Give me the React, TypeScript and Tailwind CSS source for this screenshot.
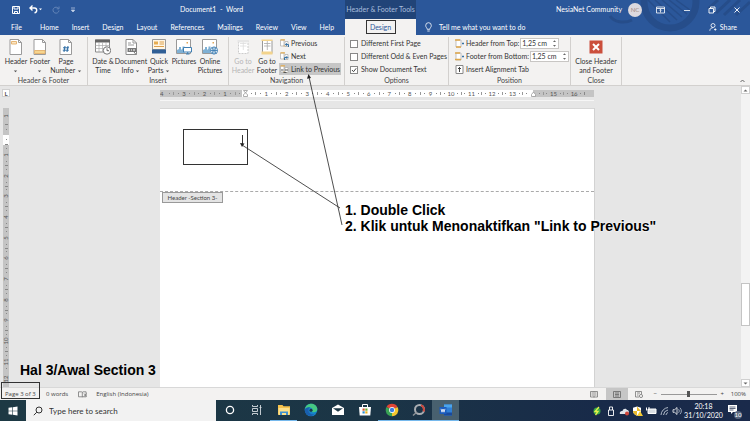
import type { ReactNode } from 'react';

const tabs = ['Home', 'Insert', 'Design', 'Layout', 'References', 'Mailings', 'Review', 'View', 'Help'];

const horizontalMarks = [3, 2, 1, 0, 1, 2, 3, 4, 5, 6, 7, 8, 9, 10, 11, 12, 13, 14, 15, 16];
const verticalMarks = [0, 1, 2, 3, 4, 5, 6, 7, 8, 9, 10, 11];

/* ---------- icons ---------- */

function SheetIcon({ kind }: { kind: 'header' | 'footer' | 'number' }) {
  return (
    <svg className="h-4 w-4" viewBox="0 0 16 16" fill="none">
      <path d="M2 .5h8.5l3 3v12H2z" fill="#fff" stroke="#9a9a9a" />
      <path d="M10.5.5v3h3" stroke="#9a9a9a" />
      {kind === 'header' && <path d="M3.5 2.5h5v2.500h-5z" fill="#fbe6c4" stroke="#e6b674" />}
      {kind === 'footer' && <path d="M2.500 11.500h10.500v3H2.500z" fill="#f6d58e" stroke="#e6b674" />}
      {kind === 'number' && <path d="M7 7l-1 6M10 7l-1 6M5 8.800h6M4.800 11.200h6" stroke="#2e6da4" />}
    </svg>
  );
}

function CalendarIcon() {
  return (
    <svg className="h-4 w-4" viewBox="0 0 16 16" fill="none">
      <path d="M.5 1h14v12H.5z" fill="#fff" stroke="#8a8a8a" />
      <path d="M0 .5h15v3H0z" fill="#666" />
      <path d="M.5 6.500h14M.5 9.500h14M4 3v10M7.500 3v10M11 3v10" stroke="#aaa" strokeWidth=".7" />
      <circle cx="12" cy="11.500" r="3.700" fill="#fff" stroke="#777" />
      <path d="M12 9.300v2.400h2" stroke="#444" strokeWidth=".8" />
    </svg>
  );
}

function DocumentInfoIcon() {
  return (
    <svg className="h-4 w-4" viewBox="0 0 16 16" fill="none">
      <path d="M3 .5h7l3.500 3.500v11.500H3z" fill="#fff" stroke="#8a8a8a" />
      <path d="M10 .5V4h3.500M5 4h3M5 6h6" stroke="#999" />
      <path d="M4.500 9h9v4h-9z" fill="#777" />
      <path d="M6 11h1m1 0h1m1 0h2" stroke="#fff" />
      <path d="M11 13l2 2.500" stroke="#777" />
    </svg>
  );
}

function QuickPartsIcon() {
  return (
    <svg className="h-4 w-4" viewBox="0 0 16 16" fill="none">
      <path d="M1.500.5h13v10h-13z" fill="#fff6e5" stroke="#999" />
      <path d="M3 2.500h4v3H3z" fill="#e6ac50" />
      <path d="M8.500 3H13M8.500 5H13M3 7.500h10" stroke="#dca04c" />
      <path d="M1 10.500h14v4H1z" fill="#2f5f96" />
    </svg>
  );
}

function PictureIcon({ online }: { online?: boolean }) {
  return (
    <svg className="h-4 w-4" viewBox="0 0 16 16" fill="none">
      <path d="M.5.5h14v14H.5z" fill="#fff" stroke="#999" />
      <path d="M1 14V11l2-1V8h2v3l1.500-1.500V7.500h2V14z" fill="#7fb0d4" />
      <path d="M10.500 3h1.500v1.500h-1.500z" fill="#e0a75a" />
      {online ? (
        <g stroke="#3f7fb3" strokeWidth=".9">
          <circle cx="12" cy="11.500" r="3.600" fill="#fff" />
          <path d="M8.500 11.500h7M12 8v7.200M10 8.700c1.300 1.800 1.300 4 0 5.700M14 8.700c-1.300 1.800-1.300 4 0 5.700" />
        </g>
      ) : (
        <path d="M7.500 8.500h8v4.500h-8zM10 15h3.500M11.700 13v2" fill="#fff" stroke="#3f7fb3" />
      )}
    </svg>
  );
}

function GoToIcon({ footer }: { footer?: boolean }) {
  return (
    <svg className="h-4 w-4" viewBox="0 0 16 16" fill="none">
      <path d="M3.500 1.500h9.500v13H3.500z" fill="#fff" stroke={footer ? '#999' : '#ccc'} strokeDasharray={footer ? undefined : '2 1'} />
      <path d="M5 4.500h6.500M5 7h6.500M8.300 2v9" stroke={footer ? '#aaa' : '#ddd'} strokeWidth=".8" />
      <path
        d={footer ? 'M2.500 .5h11v1.500h-11zM2.500 12.500h11v3h-11z' : 'M2.500 1h11v2.500h-11z'}
        fill={footer ? '#f3d48d' : '#e6e6e6'}
      />
    </svg>
  );
}

function MoveIcon({ kind }: { kind: 'previous' | 'next' | 'link' }) {
  return (
    <svg className="h-[9px] w-[9px] shrink-0" viewBox="0 0 9 9" fill="none">
      <path d="M.5 1h3.500v6H.5z" fill="#fff" stroke="#aaa" strokeWidth=".7" />
      <path d="M.5 .8h4.500M3.500 7h4.500" stroke="#e3ad54" strokeWidth="1.200" />
      <path d="M5 2.500h3v5H5z" fill="#fff" stroke="#aaa" strokeWidth=".7" />
      {kind === 'previous' && <path d="M8.500 8V5.500H5.500M6.800 4.200L5.500 5.500l1.300 1.300" stroke="#3572a5" />}
      {kind === 'next' && <path d="M4.500 8V5.500h3M6.500 4.200l1.300 1.300-1.300 1.300" stroke="#3572a5" />}
      {kind === 'link' && <path d="M1 5h2.500M5 5h3M3.500 7.500h3" stroke="#555" />}
    </svg>
  );
}

function MarginIcon({ kind }: { kind: 'top' | 'bottom' | 'tab' }) {
  if (kind === 'tab') {
    return (
      <svg className="h-[9px] w-[9px] shrink-0" viewBox="0 0 9 9" fill="none">
        <path d="M1 .5h7v8H1z" fill="#fff" stroke="#888" />
        <path d="M4.500 2v5M3 3.500h3" stroke="#444" />
      </svg>
    );
  }
  return (
    <svg className="h-[9px] w-[9px] shrink-0" viewBox="0 0 9 9" fill="none">
      <path d="M1 1h5v7H1z" fill="#fff" stroke="#aaa" strokeWidth=".7" />
      <path d={kind === 'top' ? 'M0 1h5M1 8h5' : 'M0 1h5M0 7.500h6'} stroke="#dfa748" strokeWidth="1.500" />
      <path d="M8 3.500v2M7 4.500h2" stroke="#3572a5" />
    </svg>
  );
}

function Caret() {
  return (
    <svg className="inline h-[3px] w-[5px]" viewBox="0 0 5 3">
      <path d="M.8 .5h3.400L2.500 2.300z" fill="#555" />
    </svg>
  );
}

/* ---------- title bar and tabs ---------- */

function TitleBar() {
  return (
    <header className="relative flex h-[19px] items-center text-white">
      <div className="flex w-[180px] items-center gap-[9px] pl-3">
        <button aria-label="Save">
          <svg className="h-2 w-2" viewBox="0 0 8 8" fill="none" stroke="#fff">
            <path d="M.5.5h7v7h-7zM2 .5v2.500h4V.5M2.500 7.500v-2h3v2" />
          </svg>
        </button>
        <button aria-label="Undo" className="flex items-center">
          <svg className="h-[9px] w-[9px]" viewBox="0 0 9 9" fill="none" stroke="#fff" strokeWidth="1.400">
            <path d="M3.500.5L1 3l2.500 2.500M1 3h4.500c3 0 3 4.500 0 4.800" />
          </svg>
          <svg className="h-[3px] w-[5px]" viewBox="0 0 5 3">
            <path d="M1 .5h3L2.500 2.200z" fill="#fff" />
          </svg>
        </button>
        <button aria-label="Redo">
          <svg className="h-2 w-2" viewBox="0 0 8 8" fill="none" stroke="#6485b8">
            <path d="M6.500 2.500A3 3 0 1 0 7 4.500M7 .5v2.300H4.700" />
          </svg>
        </button>
        <button aria-label="Customize Quick Access Toolbar">
          <svg className="h-2 w-2" viewBox="0 0 8 8">
            <path d="M2 2h4M2.300 4h3.400L4 6z" fill="#c5d3e8" stroke="#c5d3e8" strokeWidth=".7" />
          </svg>
        </button>
      </div>
      <h1 className="flex-1 text-[7px]">Document1&nbsp; -&nbsp; Word</h1>
      <div className="flex items-center">
        <span className="text-[7px]">NesiaNet Community</span>
        <span className="ml-[6px] flex h-[14px] w-[14px] items-center justify-center rounded-full bg-[#dcd9de] text-[6px] text-[#a08880]">NC</span>
        <button aria-label="Ribbon Display Options" className="ml-[14px]">
          <svg className="h-2 w-[9px]" viewBox="0 0 9 8" fill="none" stroke="#fff" strokeWidth=".8">
            <path d="M.5 1h8v6h-8zM.5 2.500h8M4.500 6.500v-3M3.300 4.500l1.200-1.200 1.200 1.200" />
          </svg>
        </button>
        <button aria-label="Minimize" className="ml-[18px]">
          <svg className="h-2 w-2" viewBox="0 0 8 8" stroke="#fff" strokeWidth=".8"><path d="M1 4.500h6" /></svg>
        </button>
        <button aria-label="Restore" className="ml-[17px]">
          <svg className="h-2 w-2" viewBox="0 0 8 8" fill="none" stroke="#fff" strokeWidth=".9">
            <path d="M1 2.500h4.500V7H1zM2.500 2.500V1H7v4.500H5.500" />
          </svg>
        </button>
        <button aria-label="Close" className="ml-[17px] mr-[9px]">
          <svg className="h-2 w-2" viewBox="0 0 8 8" stroke="#fff" strokeWidth=".9"><path d="M1.500 1.500l5 5M6.500 1.500l-5 5" /></svg>
        </button>
      </div>
      <div className="absolute left-[345px] top-0 flex h-[19px] w-[71px] items-center justify-center bg-[#214478] text-[7px] whitespace-nowrap text-[#a9bedd]">
        Header &amp; Footer Tools
      </div>
    </header>
  );
}

function TabRow() {
  return (
    <nav className="relative flex h-4 items-stretch text-[7px] text-white">
      <div className="flex w-[345px] items-center pl-[11px]">
        <button className="mr-[18px]">File</button>
        <div className="flex gap-[13px]">
          {tabs.map((tab) => (
            <button key={tab}>{tab}</button>
          ))}
        </div>
      </div>
      <div className="flex w-[71px] items-center justify-center bg-[#f3f2f1]">
        <button className="h-[14px] w-[30px] border border-[#333] text-[#2b579a]">Design</button>
      </div>
      <button className="ml-[8px] flex items-center gap-[6px]">
        <svg className="h-[10px] w-[9px]" viewBox="0 0 9 10" fill="none" stroke="#fff" strokeWidth=".8">
          <path d="M3.200 7.300C3.200 5.800 1.700 5.400 1.700 3.500a2.800 2.800 0 0 1 5.600 0c0 1.900-1.500 2.300-1.500 3.800zM3.300 9h2.400" />
        </svg>
        Tell me what you want to do
      </button>
      <button className="ml-auto mr-[13px] flex items-center gap-[3px]">
        <svg className="h-2 w-2" viewBox="0 0 8 8" fill="none" stroke="#fff" strokeWidth=".8">
          <circle cx="4" cy="2.500" r="2" />
          <path d="M.8 7.800C1 5.500 2.500 4.700 4 4.700M5 6.500h2.500M6.300 5.300v2.400" />
        </svg>
        Share
      </button>
    </nav>
  );
}

/* ---------- ribbon ---------- */

function Group({ title, className, children }: { title: string; className: string; children: ReactNode }) {
  return (
    <section className={`mt-[2px] flex flex-col border-r border-[#d2d0ce] ${className}`}>
      <div className="flex flex-1">{children}</div>
      <h2 className="h-[9px] text-center text-[7px] leading-[9px] text-[#444]">{title}</h2>
    </section>
  );
}

type BigButtonProps = {
  icon: ReactNode;
  lines: string[];
  menu?: boolean;
  disabled?: boolean;
  className: string;
};

function BigButton({ icon, lines, menu, disabled, className }: BigButtonProps) {
  return (
    <button disabled={disabled} className={`flex shrink-0 flex-col items-center pt-[2px] whitespace-nowrap disabled:text-[#b5b5b5] ${className}`}>
      {icon}
      <span className="mt-[2px] text-[7px] leading-[9px]">
        {lines[0]}
        <br />
        {lines[1]}
        {menu && <>{lines[1] && ' '}<Caret /></>}
      </span>
    </button>
  );
}

function Option({ label, checked }: { label: string; checked?: boolean }) {
  return (
    <label className="flex h-[13px] items-center gap-[3px] whitespace-nowrap">
      <span className="relative flex h-2 w-2">
        <input type="checkbox" defaultChecked={checked} className="peer h-2 w-2 appearance-none border border-[#888] bg-white" />
        <svg className="pointer-events-none absolute inset-0 hidden h-2 w-2 peer-checked:block" viewBox="0 0 8 8" fill="none" stroke="#444">
          <path d="M2 4l1.500 1.700L6.200 2.300" />
        </svg>
      </span>
      {label}
    </label>
  );
}

function Distance({ id, label, kind }: { id: string; label: string; kind: 'top' | 'bottom' }) {
  return (
    <div className="flex h-[13px] items-center whitespace-nowrap">
      <MarginIcon kind={kind} />
      <label htmlFor={id} className="ml-[2px] mr-px">{label}</label>
      <span className="flex h-[11px] w-[39px] items-center border border-[#c8c6c4] bg-white">
        <input id={id} defaultValue="1,25 cm" className="h-[9px] w-[30px] bg-transparent pl-px outline-none" />
        <svg className="h-[9px] w-[7px]" viewBox="0 0 7 9" fill="#666">
          <path d="M2 3h3L3.500 1.300zM2 6h3L3.500 7.700z" />
        </svg>
      </span>
    </div>
  );
}

function Ribbon() {
  return (
    <div className="relative flex h-[51px] border-b border-[#d2d0ce] bg-[#f3f2f1] text-[7px] text-[#333]">
      <Group title="Header & Footer" className="w-[88px]">
        <BigButton icon={<SheetIcon kind="header" />} lines={['Header', '']} menu className="ml-1 w-6" />
        <BigButton icon={<SheetIcon kind="footer" />} lines={['Footer', '']} menu className="w-6" />
        <BigButton icon={<SheetIcon kind="number" />} lines={['Page', 'Number']} menu className="w-7" />
      </Group>
      <Group title="Insert" className="w-[141px]">
        <BigButton icon={<CalendarIcon />} lines={['Date &', 'Time']} className="ml-[3px] w-6" />
        <BigButton icon={<DocumentInfoIcon />} lines={['Document', 'Info']} menu className="w-8" />
        <BigButton icon={<QuickPartsIcon />} lines={['Quick', 'Parts']} menu className="w-6" />
        <BigButton icon={<PictureIcon />} lines={['Pictures', '']} className="w-[26px]" />
        <BigButton icon={<PictureIcon online />} lines={['Online', 'Pictures']} className="w-[26px]" />
      </Group>
      <Group title="Navigation" className="w-[116px]">
        <BigButton icon={<GoToIcon />} lines={['Go to', 'Header']} disabled className="ml-[2px] w-6" />
        <BigButton icon={<GoToIcon footer />} lines={['Go to', 'Footer']} className="w-6" />
        <div className="flex w-[62px] flex-col whitespace-nowrap">
          <button className="flex h-[13px] items-center gap-[2px] pl-px"><MoveIcon kind="previous" />Previous</button>
          <button className="flex h-[13px] items-center gap-[2px] pl-px"><MoveIcon kind="next" />Next</button>
          <button className="flex h-[12px] items-center gap-[2px] bg-[#c6c6c6] pl-px"><MoveIcon kind="link" />Link to Previous</button>
        </div>
      </Group>
      <Group title="Options" className="w-[104px]">
        <div className="flex flex-col pl-[5px]">
          <Option label="Different First Page" />
          <Option label="Different Odd & Even Pages" />
          <Option label="Show Document Text" checked />
        </div>
      </Group>
      <Group title="Position" className="w-[122px]">
        <div className="flex flex-col pl-[6px]">
          <Distance id="header-top" label="Header from Top:" kind="top" />
          <Distance id="footer-bottom" label="Footer from Bottom:" kind="bottom" />
          <button className="flex h-[12px] items-center gap-[2px]"><MarginIcon kind="tab" />Insert Alignment Tab</button>
        </div>
      </Group>
      <Group title="Close" className="w-[51px]">
        <BigButton
          icon={
            <svg className="h-4 w-4" viewBox="0 0 16 16">
              <path d="M1.500 1.500h13v13h-13z" fill="#cb4f3c" />
              <path d="M5 5l6 6M11 5l-6 6" stroke="#fff" strokeWidth="2" />
            </svg>
          }
          lines={['Close Header', 'and Footer']}
          className="w-full"
        />
      </Group>
      <button aria-label="Collapse the Ribbon" className="ml-auto mr-[5px] self-end pb-[2px]">
        <svg className="h-[4px] w-[5px]" viewBox="0 0 5 4" fill="none" stroke="#666"><path d="M.5 3l2-2 2 2" /></svg>
      </button>
    </div>
  );
}

/* ---------- document area ---------- */

function HorizontalRuler() {
  return (
    <div className="flex h-[7px] min-w-0 flex-1 overflow-hidden bg-[linear-gradient(90deg,#c4c4c4_18.9%,#fff_18.9%,#fff_85.9%,#c4c4c4_85.9%)] text-[6px] leading-[7px] text-[#555]">
      <span className="flex flex-2 items-center justify-between pr-[3px]">
        <span>4</span>
        <i className="h-px w-px bg-[#888]" />
      </span>
      {horizontalMarks.map((mark, i) => (
        <span key={i} className="flex min-w-0 flex-4 items-center justify-between">
          <i className="h-[3px] w-px bg-[#999]" />
          <i className="h-px w-px bg-[#888]" />
          {mark === 0 ? (
            <svg className="h-[7px] w-[5px]" viewBox="0 0 5 7" fill="#fff" stroke="#999" strokeWidth=".8">
              <path d="M.5.5h4L2.500 3zM.5 6.500h4v-2L2.500 3l-2 1.500z" />
            </svg>
          ) : mark === 14 ? (
            <svg className="h-[7px] w-[5px]" viewBox="0 0 5 7" fill="#fff" stroke="#999" strokeWidth=".8">
              <path d="M.5 6.500h4v-2L2.500 2l-2 2.500z" />
            </svg>
          ) : (
            <span>{mark}</span>
          )}
          <i className="h-px w-px bg-[#888]" />
          <i />
        </span>
      ))}
      <span className="flex flex-2 items-center">
        <i className="h-[3px] w-px bg-[#888]" />
      </span>
    </div>
  );
}

function VerticalRuler() {
  return (
    <div className="ml-[3px] flex w-[6px] flex-col overflow-hidden bg-[linear-gradient(180deg,#c4c4c4_9.7%,#fff_9.7%,#fff_13.3%,#c4c4c4_13.3%)] text-[6px] leading-[6px] text-[#555]">
      <span className="flex min-h-0 flex-3 flex-col items-center justify-center">
        <span className="-rotate-90">1</span>
      </span>
      {verticalMarks.map((mark) => (
        <span key={mark} className="flex min-h-0 flex-4 flex-col items-center justify-between">
          <i className="h-px w-[3px] bg-[#888]" />
          <i className="h-px w-px bg-[#888]" />
          <span className="-rotate-90">{mark || ''}</span>
          <i className="h-px w-px bg-[#888]" />
          <i />
        </span>
      ))}
      <span className="flex min-h-0 flex-3 flex-col items-center justify-center">
        <span className="-rotate-90">12</span>
      </span>
    </div>
  );
}

function Scrollbar() {
  return (
    <div className="flex w-[9px] flex-col bg-[#f3f3f3]">
      <button aria-label="Scroll up" className="flex h-2 items-center justify-center border border-[#d0d0d0] bg-white">
        <svg className="h-[3px] w-[5px]" viewBox="0 0 5 3"><path d="M.5 2.500h4L2.500.5z" fill="#666" /></svg>
      </button>
      <div className="flex-187" />
      <div className="h-[43px] border border-[#c4c4c4] bg-white" />
      <div className="flex-53" />
      <button aria-label="Scroll down" className="flex h-2 items-center justify-center border border-[#d0d0d0] bg-white">
        <svg className="h-[3px] w-[5px]" viewBox="0 0 5 3"><path d="M.5.5h4L2.500 2.500z" fill="#666" /></svg>
      </button>
    </div>
  );
}

function Workspace() {
  return (
    <main className="relative flex min-h-0 flex-1 bg-[#e6e6e6]">
      <div className="flex min-w-0 flex-1 flex-col">
        <div className="flex h-[14px] items-center">
          <div className="w-40 pl-[2px]">
            <span className="flex h-2 w-2 items-center justify-center border border-[#d0d0d0] bg-white text-[6px] font-bold text-[#555]">L</span>
          </div>
          <HorizontalRuler />
          <div className="w-[147px]" />
        </div>
        <div className="mr-[147px] ml-40 h-px bg-[#f6f6f6]" />
        <div className="flex min-h-0 flex-1 pt-[7px]">
          <div className="flex w-40">
            <VerticalRuler />
          </div>
          <article className="min-w-0 flex-1 border-t border-[#d6d6d6] bg-white">
            <div className="h-[83px] border-b border-dashed border-[#aaa] pt-5 pl-[23px]">
              <div className="flex h-9 w-[65px] justify-end border border-[#333] pt-[5px] pr-[4px]">
                <i className="h-[10px] w-px bg-[#333]" />
              </div>
            </div>
            <div className="ml-[2px] flex h-[11px] w-[61px] items-center justify-center border border-[#999] bg-[#e4e4e4] text-[6px] whitespace-nowrap text-[#444]">
              Header -Section 3-
            </div>
          </article>
          <div className="w-[147px] border-l border-[#d2d2d2]" />
        </div>
      </div>
      <Scrollbar />

      <p className="absolute bottom-[7px] left-5 font-['Liberation_Sans',sans-serif] text-[14px] leading-5 font-bold text-black">
        Hal 3/Awal Section 3
      </p>
      <ol className="absolute top-[116px] left-[345px] font-['Liberation_Sans',sans-serif] text-[14px] leading-4 font-bold whitespace-nowrap text-black [text-shadow:0_0_2px_#fff,0_0_2px_#fff]">
        <li>1. Double Click</li>
        <li>2. Klik untuk Menonaktifkan &quot;Link to Previous&quot;</li>
      </ol>
      {/* pointers from the steps to the cursor and the ribbon button */}
      <svg className="pointer-events-none absolute -top-3 left-[239px] h-[154px] w-[104px]" viewBox="0 0 104 154" fill="none" stroke="#222" strokeWidth=".8">
        <path d="M101 134L3 71M103 151L70 3" />
        <path d="M1 69l4.500.5L3 73zM69.500 0l2.500 4-4 .8z" fill="#222" stroke="none" />
      </svg>
    </main>
  );
}

function StatusBar() {
  return (
    <footer className="relative flex h-[13px] items-center border-t border-[#d8d8d8] bg-[#f3f2f1] font-['Open_Sans','Noto_Sans',sans-serif] text-[6px] text-[#444]">
      <div className="absolute -top-[6px] left-px h-[17px] w-[39px] border border-[#333]" />
      <span className="w-[41px] pl-[5px] whitespace-nowrap">Page 3 of 3</span>
      <span className="ml-[5px]">0 words</span>
      <svg className="ml-[10px] h-[7px] w-[9px]" viewBox="0 0 9 7" fill="none" stroke="#777" strokeWidth=".8">
        <path d="M4.300 1.200v5M.5.8h3l.8.5.8-.5h3v5H.5zM6 2.500l2.500 3M8.500 2.500L6 5.500" />
      </svg>
      <span className="ml-[9px]">English (Indonesia)</span>
      <div className="ml-auto flex h-full items-center">
        <button aria-label="Read Mode" className="flex w-[24px] justify-center">
          <svg className="h-[7px] w-2" viewBox="0 0 8 7" fill="none" stroke="#777" strokeWidth=".8"><path d="M.5.5h7v5.500h-7zM4 .5v6M1.500 2h1.500M1.500 4h1.500M5 2h1.500M5 4h1.500" /></svg>
        </button>
        <button aria-label="Print Layout" className="flex h-full w-[22px] items-center justify-center bg-[#c6c6c6]">
          <svg className="h-[7px] w-2" viewBox="0 0 8 7" fill="none" stroke="#666" strokeWidth=".8"><path d="M.5.5h7v6h-7zM2 2h4M2 3.500h4M2 5h4" /></svg>
        </button>
        <button aria-label="Web Layout" className="flex w-[22px] justify-center">
          <svg className="h-[7px] w-2" viewBox="0 0 8 7" fill="none" stroke="#777" strokeWidth=".8"><path d="M4 6H.5V.5h6V3M2 2h3M2 4h1.500" /><circle cx="6" cy="5" r="1.600" /></svg>
        </button>
        <button aria-label="Zoom out" className="ml-[3px] w-[5px] leading-none">−</button>
        <input
          type="range"
          aria-label="Zoom"
          defaultValue={50}
          className="mx-[3px] h-[7px] w-[56px] appearance-none bg-[linear-gradient(#999,#999)] bg-[length:100%_1px] bg-center bg-no-repeat [&::-webkit-slider-thumb]:h-[6px] [&::-webkit-slider-thumb]:w-[3px] [&::-webkit-slider-thumb]:appearance-none [&::-webkit-slider-thumb]:bg-[#555]"
        />
        <button aria-label="Zoom in" className="w-[5px] leading-none">+</button>
        <span className="mr-[4px] ml-[6px]">100%</span>
      </div>
    </footer>
  );
}

/* ---------- taskbar ---------- */

function TaskbarApp({ name, open, active, children }: { name: string; open?: boolean; active?: boolean; children: ReactNode }) {
  return (
    <button
      aria-label={name}
      className={`flex h-full w-[27px] items-center justify-center border-b ${open ? 'border-[#76b9ed]' : 'border-transparent'} ${active ? 'bg-[#48606f]' : ''}`}
    >
      <svg className="h-[14px] w-[14px]" viewBox="0 0 14 14" fill="none">
        {children}
      </svg>
    </button>
  );
}

function Taskbar() {
  return (
    <div className="flex h-[21px] items-stretch bg-[linear-gradient(90deg,#1d3944,#1b3546_50%,#182a49_80%,#1a2a4b)] text-white">
      <button aria-label="Start" className="flex w-[26px] items-center justify-center">
        <svg className="h-[10px] w-[10px]" viewBox="0 0 10 10" fill="#fff">
          <path d="M.5 1.800l3.800-.5v3.400H.5zM4.900 1.200L9.500.5v4.200H4.900zM.5 5.300h3.800v3.400l-3.800-.5zM4.900 5.300h4.600v4.200l-4.600-.7z" />
        </svg>
      </button>
      <label className="flex w-[190px] items-center bg-[#f2f2f2] pl-[7px]">
        <svg className="h-[10px] w-[10px]" viewBox="0 0 10 10" fill="none" stroke="#333">
          <circle cx="6" cy="4" r="3" />
          <path d="M3.800 6.200L.8 9.200" />
        </svg>
        <input aria-label="Search" placeholder="Type here to search" className="ml-[6px] w-[150px] bg-transparent text-[8px] outline-none placeholder:text-[#333]" />
      </label>
      <TaskbarApp name="Cortana"><circle cx="7" cy="7" r="3.600" stroke="#fff" strokeWidth="1.300" /></TaskbarApp>
      <TaskbarApp name="Task View">
        <path d="M2.500 2v1.500h5V2M2.500 5.500h5v3h-5zM2.500 12v-1.500h5V12M10.500 2v10M9.500 4.500h2" stroke="#d5dbe0" strokeWidth=".9" />
      </TaskbarApp>
      <TaskbarApp name="File Explorer" open>
        <path d="M1 2h4.500l1 1.200H13v8.500H1z" fill="#f5c24c" />
        <path d="M1.500 5h11v7h-11z" fill="#fbe08a" />
        <path d="M3 8.500h8V12H9V10H5v2H3z" fill="#3f90cf" />
      </TaskbarApp>
      <TaskbarApp name="Microsoft Edge">
        <circle cx="7" cy="7" r="6.300" fill="#1683c9" />
        <path d="M.8 6.500C1.500 2.800 4 .7 7.200.7c3.700 0 6.100 2.700 6.100 5.300 0 2.200-1.600 3.300-3.500 3.300-1.500 0-2-.6-1.600-1.300.8-1.300 0-3.300-2-3.500C4 4.300 1.800 4.800.8 6.500z" fill="#45c983" />
        <path d="M.8 6.500C2 4.500 4.500 4 6.200 4.500 4.500 5 4 7 4.800 8.800c.8 1.900 3 3 5.400 2.400-2.600 3.300-9.400 2-9.400-4.700z" fill="#1a5fae" />
        <circle cx="7" cy="7.200" r="1.500" fill="#1d3944" />
      </TaskbarApp>
      <TaskbarApp name="Mail">
        <path d="M1 5l6-3.500L13 5v7H1z" fill="#fff" />
        <path d="M2 5.200h10L7 8.800z" fill="#1c3745" />
      </TaskbarApp>
      <TaskbarApp name="Microsoft Store">
        <path d="M1 4h12l-.7 8.500H1.700z" fill="#fff" />
        <path d="M4.500 4V1.500h5V4" stroke="#fff" />
        <path d="M4.500 5.500h2.200v2.200H4.500z" fill="#d9532c" /><path d="M7.300 5.500h2.200v2.200H7.300z" fill="#6faf2e" />
        <path d="M4.500 8.300h2.200v2.200H4.500z" fill="#2b8fd0" /><path d="M7.300 8.300h2.200v2.200H7.300z" fill="#e9b11c" />
      </TaskbarApp>
      <TaskbarApp name="Google Chrome" open>
        <path d="M7 7L1.500 3.900A6.300 6.300 0 0 1 12.500 3.900z" fill="#e04536" />
        <path d="M7 7l5.500-3.100A6.300 6.300 0 0 1 7 13.300z" fill="#f5c52d" />
        <path d="M7 7v6.300A6.300 6.300 0 0 1 1.500 3.900z" fill="#39a455" />
        <circle cx="7" cy="7" r="2.900" fill="#fff" /><circle cx="7" cy="7" r="2.200" fill="#3c7fe0" />
      </TaskbarApp>
      <TaskbarApp name="Screen Recorder" open>
        <circle cx="7.500" cy="6.500" r="4.500" stroke="#a9adb2" strokeWidth="2" />
        <path d="M9 2.300a4.500 4.500 0 0 1 2.500 6.200" stroke="#c9473d" strokeWidth="2" />
        <path d="M1 12.500l4-3.500" stroke="#8e9297" strokeWidth="1.500" />
      </TaskbarApp>
      <TaskbarApp name="Word" open active>
        <path d="M5 1.500h8v11H5z" fill="#2f7fd6" />
        <path d="M5 1.500h8v3H5z" fill="#4ba5ec" /><path d="M5 9.500h8v3H5z" fill="#1a4a9c" />
        <path d="M.5 4h7v7h-7z" fill="#1a5bbd" />
        <path d="M2 5.800l1 3.400 1-3.200 1 3.200 1-3.400" stroke="#fff" strokeWidth=".8" />
      </TaskbarApp>

      <div className="ml-auto flex items-center">
        <svg className="h-[10px] w-[92px]" viewBox="0 0 92 10" fill="none">
          <circle cx="6" cy="5" r="3.500" fill="#39a948" />
          <path d="M8 1L4 5.500h3L4.500 9" stroke="#e3f04a" strokeWidth="1.300" />
          <path d="M17.500 4h5v5.500h-5zM18.500 4V1h3v3" stroke="#fff" strokeWidth=".9" />
          <path d="M29 8c-1-2 1-3.500 2.500-3C32 2.500 35 2 36 4c2 0 2.500 2.500 1 4z" fill="#dfe5ea" />
          <circle cx="36" cy="7.500" r="2" fill="#d0473c" />
          <path d="M46 .5l4 1.200v3.300c0 2.500-2 4-4 4.800-2-.8-4-2.300-4-4.800V1.700z" fill="#fff" />
          <path d="M46 .5v9.300c-2-.8-4-2.300-4-4.800V5h8" fill="#e8b92c" />
          <path d="M49 5l3 5h-6z" fill="#f6cb32" />
          <path d="M57 3h8v4.500h-8z" fill="#d9dee4" stroke="#fff" /><path d="M55.500 1.500v3M58 1v3" stroke="#fff" />
          <path d="M70 9a8 8 0 0 1 7-7.500M72.500 9a5.500 5.500 0 0 1 4.500-5M75 9a3 3 0 0 1 2-2.500" stroke="#aeb8c6" />
          <path d="M82 3.700h1.700L86 1.500v7L83.700 6.300H82z" stroke="#fff" strokeWidth=".8" />
          <path d="M87.500 3.200c1 1 1 2.600 0 3.600M89 1.800c1.800 1.800 1.800 4.600 0 6.400" stroke="#b9c3d1" strokeWidth=".8" />
        </svg>
        <time className="w-[41px] text-center text-[7px] leading-[9px]">
          20:18
          <br />
          31/10/2020
        </time>
        <button aria-label="Notifications, 10 new" className="relative mr-[10px] ml-[4px]">
          <svg className="h-[11px] w-[12px]" viewBox="0 0 12 11" fill="#fff">
            <path d="M0 0h9v7H5L3 9V7H0z" />
            <path d="M1.500 2h6M1.500 3.500h6M1.500 5h4" stroke="#1a2a4b" strokeWidth=".7" />
          </svg>
          <span className="absolute -right-[2px] -bottom-[3px] flex h-2 w-2 items-center justify-center rounded-full bg-[#59677f] text-[6px] leading-none">10</span>
        </button>
      </div>
    </div>
  );
}

export default function App() {
  return (
    <div className="flex h-screen flex-col overflow-hidden bg-[#e6e6e6] font-[Lato,'Open_Sans',sans-serif]">
      <div className="relative bg-[#2b579a]">
        <svg className="pointer-events-none absolute top-0 right-0 h-[35px] w-[190px]" viewBox="0 0 190 35" fill="none" stroke="#264d8a">
          <circle cx="110" cy="2" r="26" strokeWidth="7" />
          <path d="M88 0l22 22M95 0l22 20M102 0l20 17M109 0l18 14M116 0l14 10" strokeWidth="1.500" />
          <path d="M50 16c4 6 14 8 22 4" strokeWidth="3" />
          <path d="M158 0l-10 9M170 0l-14 13M180 0l-16 15M190 2l-14 13" strokeWidth="3" />
        </svg>
        <TitleBar />
        <TabRow />
      </div>
      <Ribbon />
      <Workspace />
      <StatusBar />
      <Taskbar />
    </div>
  );
}
